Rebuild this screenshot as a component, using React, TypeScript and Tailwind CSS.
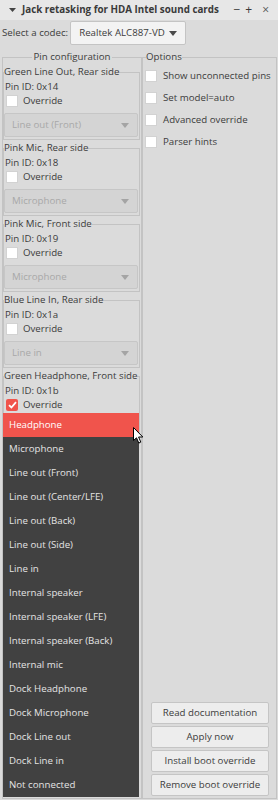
import React from 'react';

const pins = [
  { name: 'Green Line Out, Rear side', id: '0x14', value: 'Line out (Front)' },
  { name: 'Pink Mic, Rear side', id: '0x18', value: 'Microphone' },
  { name: 'Pink Mic, Front side', id: '0x19', value: 'Microphone' },
  { name: 'Blue Line In, Rear side', id: '0x1a', value: 'Line in' },
  { name: 'Green Headphone, Front side', id: '0x1b', value: 'Headphone', checked: true, open: true },
];

const choices = [
  'Headphone',
  'Microphone',
  'Line out (Front)',
  'Line out (Center/LFE)',
  'Line out (Back)',
  'Line out (Side)',
  'Line in',
  'Internal speaker',
  'Internal speaker (LFE)',
  'Internal speaker (Back)',
  'Internal mic',
  'Dock Headphone',
  'Dock Microphone',
  'Dock Line out',
  'Dock Line in',
  'Not connected',
];

function Arrow({ color }: { color: string }) {
  return (
    <svg width="8" height="5" viewBox="0 0 8 5" className="shrink-0">
      <path d="M0 0 L8 0 L4 5 Z" fill={color} />
    </svg>
  );
}

function Check({ checked }: { checked?: boolean }) {
  if (checked) {
    return (
      <span className="w-[12px] h-[12px] rounded-[2px] bg-[#f0544c] flex items-center justify-center shrink-0">
        <svg width="9" height="8" viewBox="0 0 9 8">
          <path d="M1 4.2 L3.4 6.5 L8 1.2" stroke="#fff" strokeWidth="1.8" fill="none" />
        </svg>
      </span>
    );
  }
  return <span className="w-[12px] h-[12px] bg-white border border-[#d2d2d2] shrink-0" />;
}

function PinGroup({
  name,
  id,
  value,
  checked,
  open,
}: {
  name: string;
  id: string;
  value: string;
  checked?: boolean;
  open?: boolean;
}) {
  return (
    <fieldset className="mt-[1px] mr-[1px] w-[137px] border border-[#c3c3c3] px-0 pb-[2px] shrink-0">
      <legend className="px-0 leading-[14px] whitespace-nowrap">{name}</legend>
      <div className="h-[15px] leading-[15px] pl-[1px]">Pin ID: {id}</div>
      <div className="h-[14px] flex items-center pl-[2px]">
        <Check checked={checked} />
        <span className="ml-[5px] leading-[14px]">Override</span>
      </div>
      {/* the open combo is covered by its popup list */}
      <div
        className={
          open
            ? 'invisible mt-[5px] w-[134px] h-[24px]'
            : 'mt-[5px] w-[134px] h-[24px] rounded-[2px] border border-[#c6c6c6] bg-[#d4d4d4] text-[#a8a8a8] flex items-center pl-[7px] pr-[8px]'
        }
      >
        {!open && (
          <>
            <span className="flex-1">{value}</span>
            <Arrow color="#a4a4a4" />
          </>
        )}
      </div>
    </fieldset>
  );
}

const options = ['Show unconnected pins', 'Set model=auto', 'Advanced override', 'Parser hints'];
const buttons = ['Read documentation', 'Apply now', 'Install boot override', 'Remove boot override'];

export default function App() {
  return (
    <div className="relative w-[278px] h-[800px] overflow-hidden bg-[#dbdbdb] text-[#3c3c3c] text-[9.7px] font-['Open_Sans',sans-serif] flex flex-col">
      {/* title bar */}
      <div className="h-[20px] shrink-0 bg-[#e7e7e7] flex items-center pl-[9px] pr-[9px] text-[#3a3a3a]">
        <svg width="7" height="4" viewBox="0 0 7 4">
          <path d="M0 0 L7 0 L3.5 4 Z" fill="#444" />
        </svg>
        <span className="ml-[6px] font-bold text-[9.8px] whitespace-nowrap">Jack retasking for HDA Intel sound cards</span>
        <div className="flex-1" />
        <span className="text-[12px] leading-none">−</span>
        <span className="ml-[5px] text-[12px] leading-none">+</span>
        <span className="ml-[10px] text-[12px] leading-none text-[#555]">×</span>
      </div>

      {/* codec row */}
      <div className="h-[30px] shrink-0 flex items-start pt-[1px] pl-[2px]">
        <span className="leading-[24px]">Select a codec:</span>
        <div className="ml-[2px] w-[116px] h-[24px] rounded-[2px] border border-[#c4c4c4] bg-[#f3f3f3] flex items-center pl-[8px] pr-[8px]">
          <span className="flex-1 whitespace-nowrap">Realtek ALC887-VD</span>
          <Arrow color="#4a4a4a" />
        </div>
      </div>

      <div className="flex-1 min-h-0 flex pb-[1px]">
        {/* pin configuration */}
        <fieldset className="ml-[2px] w-[140px] border border-[#c3c3c3] px-0 pb-0 flex flex-col">
          <legend className="mx-auto px-[1px] leading-[14px]">Pin configuration</legend>
          {pins.map((p) => (
            <PinGroup key={p.id} {...p} />
          ))}
        </fieldset>

        {/* options */}
        <fieldset className="w-[135px] border border-[#c3c3c3] px-0 pb-[2px] flex flex-col">
          <legend className="ml-[3px] px-0 leading-[14px]">Options</legend>
          <div className="mt-[1px]">
            {options.map((o) => (
              <div key={o} className="h-[22px] flex items-center pl-[2px]">
                <Check />
                <span className="ml-[6px] whitespace-nowrap">{o}</span>
              </div>
            ))}
          </div>
          <div className="flex-1" />
          <div className="flex flex-col gap-[2px] ml-[8px]">
            {buttons.map((b) => (
              <div
                key={b}
                className="w-[118px] h-[22px] rounded-[2px] border border-[#c5c5c5] bg-[#ededed] flex items-center justify-center whitespace-nowrap"
              >
                {b}
              </div>
            ))}
          </div>
        </fieldset>
      </div>

      {/* open combo popup */}
      <div className="absolute left-[3px] top-[413px] w-[136px] bg-[#414141] text-[#e4e4e4]">
        {choices.map((c, i) => (
          <div
            key={c}
            className={i === 0 ? 'h-[24px] flex items-center pl-[6px] bg-[#f0544c] text-white' : 'h-[24px] flex items-center pl-[6px]'}
          >
            {c}
          </div>
        ))}
      </div>

      {/* mouse pointer */}
      <svg className="absolute left-[133px] top-[427px]" width="11" height="17" viewBox="0 0 11 17">
        <path d="M0.5 0.5 L0.5 13.5 L3.5 10.8 L5.8 16 L7.8 15.1 L5.6 10 L9.8 10 Z" fill="#fff" stroke="#000" strokeWidth="1" />
      </svg>
    </div>
  );
}
